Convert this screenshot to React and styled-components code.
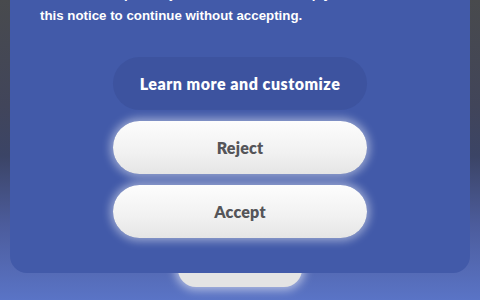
import React from "react"
import styled, { createGlobalStyle } from "styled-components"

const Global = createGlobalStyle`
  html, body { margin: 0; padding: 0; }
  body {
    width: 480px;
    height: 300px;
    overflow: hidden;
    font-family: "Lato", "Liberation Sans", sans-serif;
  }
`

export default function App() {
  return (
    <>
      <Global />
      <Page>
        <BehindButton>Continue</BehindButton>
        <Modal>
          <Notice>
            You can accept or reject all cookies, or simply close
            <br />
            this notice to continue without accepting.
          </Notice>
          <Actions>
            <Learn>Learn more and customize</Learn>
            <Choice>Reject</Choice>
            <Choice>Accept</Choice>
          </Actions>
        </Modal>
      </Page>
    </>
  )
}

const Page = styled.main`
  position: relative;
  width: 480px;
  height: 300px;
  display: flex;
  justify-content: center;
  align-items: flex-end;
  background: linear-gradient(180deg, #484a4d 0%, #41455a 35%, #3b4466 52%, #4c5c9c 75%, #5a74c6 100%);
`

const BehindButton = styled.button`
  width: 124px;
  height: 52px;
  margin-bottom: 13px;
  border: 0;
  border-radius: 18px;
  background: #e4e4e4;
  color: transparent;
  box-shadow: 0 0 10px 3px rgba(255, 255, 255, 0.55);
`

const Modal = styled.section`
  position: absolute;
  left: 10px;
  right: 10px;
  bottom: 27px;
  padding: 0 30px 35px;
  border-radius: 0 0 17px 17px;
  background: #425aa9;
  box-sizing: border-box;
`

const Notice = styled.p`
  margin: 0;
  font-family: "Liberation Sans", Arial, sans-serif;
  font-size: 13.3px;
  font-weight: 700;
  line-height: 22px;
  color: #ffffff;
`

const Actions = styled.div`
  display: flex;
  flex-direction: column;
  align-items: center;
  gap: 11px;
  margin-top: 30px;
`

const Pill = styled.button`
  width: 254px;
  height: 53px;
  border: 0;
  border-radius: 27px;
  font-family: "Lato", "Liberation Sans", sans-serif;
  font-weight: 800;
  cursor: pointer;
`

const Learn = styled(Pill)`
  background: #3d539f;
  color: #ffffff;
  font-size: 16px;
  letter-spacing: 0.5px;
`

const Choice = styled(Pill)`
  background: linear-gradient(180deg, #fdfdfd 0%, #f1f1f1 60%, #e5e5e5 100%);
  color: #555559;
  font-size: 16px;
  letter-spacing: 0.2px;
  box-shadow: 0 0 9px 3px rgba(255, 255, 255, 0.45);
`
